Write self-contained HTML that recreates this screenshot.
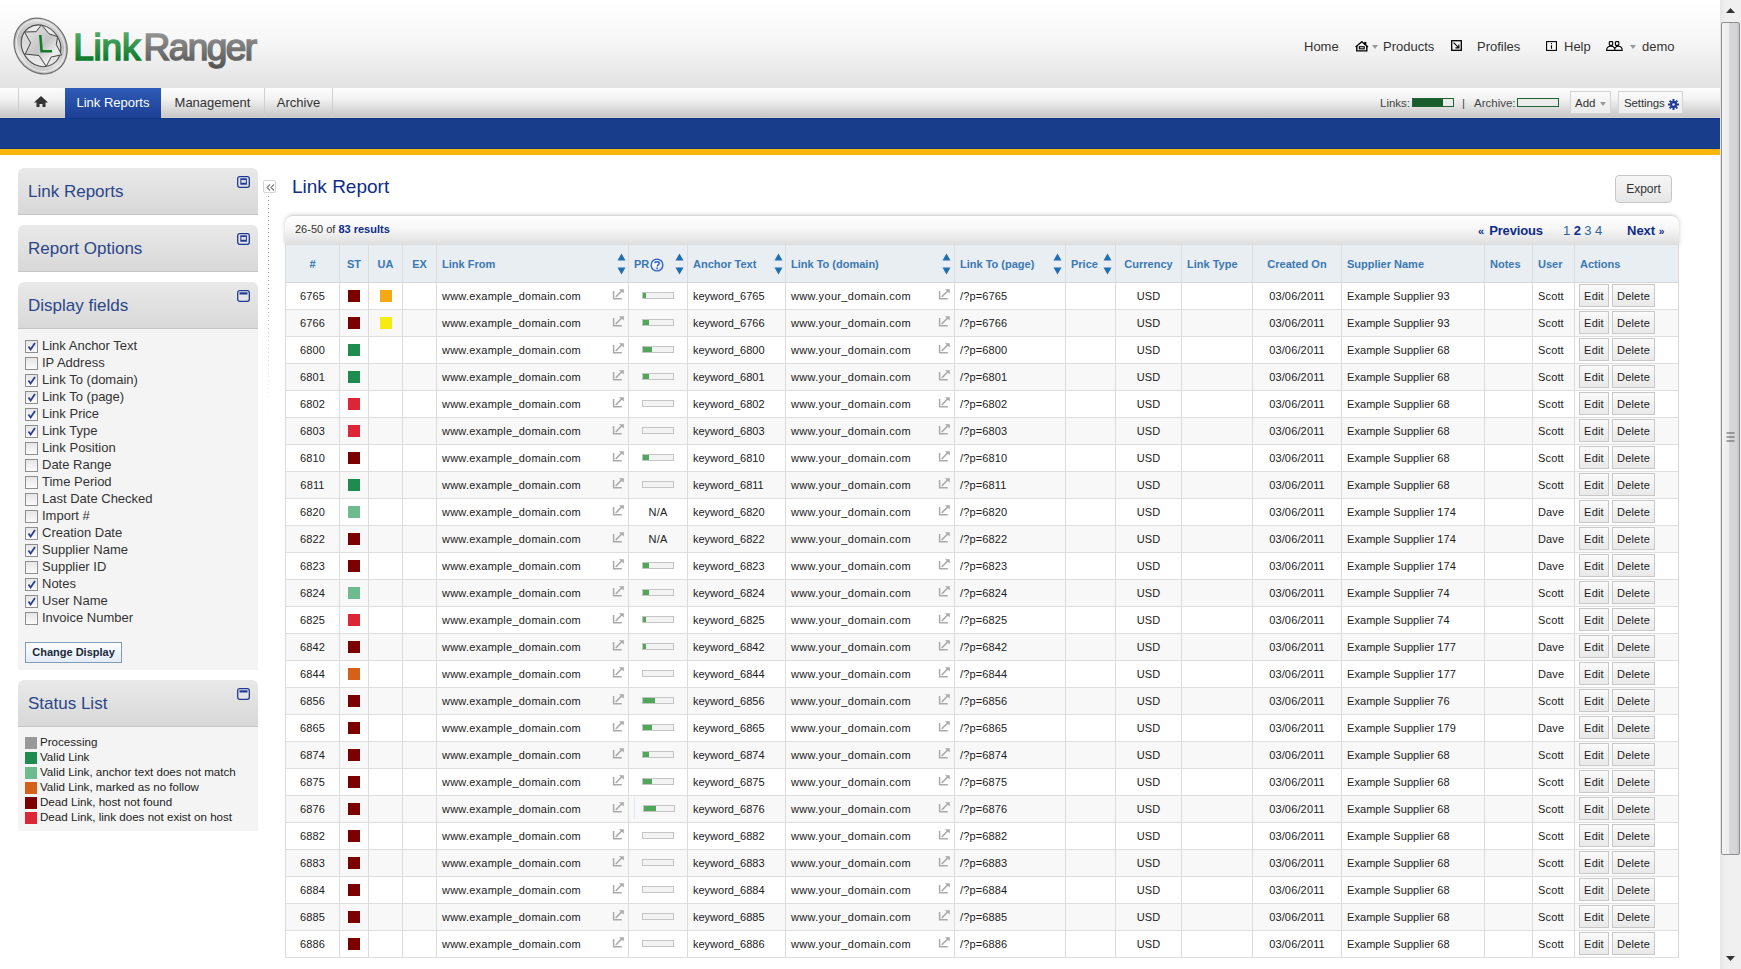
<!DOCTYPE html>
<html><head><meta charset="utf-8">
<style>
*{box-sizing:border-box;margin:0;padding:0}
html,body{width:1741px;height:969px;overflow:hidden;background:#fff;font-family:"Liberation Sans",sans-serif;color:#333}
.abs{position:absolute}
#hdr{position:absolute;left:0;top:0;width:1720px;height:88px;background:linear-gradient(#ffffff 0%,#f7f7f7 45%,#e2e2e2 100%)}
#logo{position:absolute;left:12px;top:16px}
#brand{position:absolute;left:73px;top:24px;font-size:37px;font-weight:bold;letter-spacing:-1.9px;white-space:nowrap;line-height:44px}
#brand .g{color:#1f8a3a;background:linear-gradient(#4aa662,#137a2c);-webkit-background-clip:text;color:transparent}
#brand .r{background:linear-gradient(#8e8e8e,#5c5c5c);-webkit-background-clip:text;color:transparent}
.tn{position:absolute;top:39px;font-size:13px;color:#333;white-space:nowrap;line-height:16px}
#nav{position:absolute;left:0;top:88px;width:1720px;height:30px;background:linear-gradient(#fcfcfc 0%,#f3f3f3 35%,#c8c8c8 96%,#dcd8d0 100%)}
.tab{position:absolute;top:0;height:30px;font-size:13px;line-height:30px;color:#333;text-align:center;border-left:1px solid #cfcfcf;white-space:nowrap}
.tab.on{background:linear-gradient(#2e5cb6,#1d3f93);color:#fff;border-left:none}
#blue{position:absolute;left:0;top:118px;width:1720px;height:31px;background:#183d8a;border-top:1px solid #10338a;border-bottom:1px solid #143887}
#yel{position:absolute;left:0;top:149px;width:1720px;height:6px;background:#fbb60e}
.tb{position:absolute;font-size:11.5px;line-height:14px;color:#444;white-space:nowrap}
.bar{position:absolute;top:10px;height:9px;border:1px solid #1c6431;background:#ebebeb}
.bar b{display:block;height:7px;background:#1a5e2e}
.btnx{position:absolute;top:3px;height:23px;border:1px solid #d4d4d4;background:linear-gradient(#fafafa,#ececec);font-size:11.5px;line-height:23px;color:#333;padding-left:5px;white-space:nowrap}
/* sidebar */
.ph{position:absolute;left:18px;width:240px;height:47px;border-radius:6px 6px 0 0;background:linear-gradient(#e9e9e9,#d8d8d8);border-bottom:1px solid #c6c6c6}
.ph span{position:absolute;left:10px;top:14px;font-size:17px;color:#2a4689;line-height:20px;white-space:nowrap}
.ph svg{position:absolute;left:219px;top:8px}
.pb{position:absolute;left:18px;width:240px;background:#f4f4f4}
.fld{position:absolute;left:7px;font-size:13px;line-height:17px;color:#333;white-space:nowrap;padding-left:17px}
.cb{position:absolute;left:0;top:3px;width:13px;height:13px;border:1px solid #8e8e8e;background:linear-gradient(#e6e6e6,#fafafa)}
.cb svg{position:absolute;left:1px;top:1px}
.sl{position:absolute;left:7px;font-size:11.6px;line-height:15px;color:#222;white-space:nowrap;padding-left:15px}
.sl i{position:absolute;left:0;top:3px;width:12px;height:12px}
#chg{position:absolute;left:7px;top:313px;width:97px;height:21px;border:1px solid #7f9db9;background:linear-gradient(#fdfeff,#e4ecf6);font-size:11px;font-weight:bold;color:#1a2a3a;line-height:19px;text-align:center}
/* main */
#title{position:absolute;left:292px;top:175px;font-size:19px;color:#0e2c88;line-height:24px;white-space:nowrap}
#export{position:absolute;left:1615px;top:175px;width:57px;height:28px;border:1px solid #c6c6c6;border-radius:4px;background:linear-gradient(#f6f6f6,#e6e6e6);font-size:12px;line-height:26px;text-align:center;color:#333}
#tp{position:absolute;left:285px;top:215px;width:1394px;height:743px}
#tph{position:absolute;left:0;top:0;width:1394px;height:30px;border-radius:8px 8px 0 0;background:linear-gradient(#ffffff 0%,#f8f8f8 40%,#dedede 100%);border-top:1px solid #d8d8d8;box-shadow:0 0 4px rgba(0,0,0,.2)}
#tbl{position:absolute;left:0;top:30px;width:1394px;height:713px;border-left:1px solid #d8d8d8;border-right:1px solid #d8d8d8;border-bottom:1px solid #d8d8d8}
.row,.hrow{position:absolute;left:-1px;width:1393px;height:27px;border-bottom:1px solid #dedede;background:#fff}
.row.alt{background:#f8f8f8}
.hrow{top:0;height:38px;background:#e8eef1;border-bottom:1px solid #d6d6d6}
.c{position:absolute;top:0;height:100%;border-left:1px solid #dcdcdc;font-size:11px;line-height:26px;padding-left:5px;white-space:nowrap;color:#222;letter-spacing:0.15px}
.c.ctr{text-align:center;padding-left:0}
.hrow .c{font-weight:bold;color:#3b78b4;line-height:39px;letter-spacing:0}
.sa{position:absolute;top:8px}
.q{position:absolute;left:21px;top:13px}
.sq{position:absolute;left:9px;top:7px;width:12px;height:12px}
.ext{position:absolute;right:4px;top:5px}
.pr{position:absolute;left:13px;top:9px;width:32px;height:7px;border:1px solid #c4c4c4;background:#f3f3f3}
.pr b{display:block;height:5px;background:#4fa85a}
.btn{position:absolute;top:1px;height:23px;border:1px solid #c8c8c8;background:linear-gradient(#fafafa,#e9e9e9);font-size:11px;line-height:23px;text-align:center;color:#222;letter-spacing:0.2px}
.b1{left:4px;width:30px}.b2{left:37px;width:43px}
/* scrollbar */
#sb{position:absolute;left:1720px;top:0;width:21px;height:969px;background:linear-gradient(90deg,#e6e6e6,#f0f0f0 30%,#f0f0f0)}
#thumb{position:absolute;left:1px;top:22px;width:19px;height:833px;border:1px solid #8f8f8f;border-radius:2px;background:linear-gradient(90deg,#f4f4f4,#ececec 40%,#d6d6d8 45%,#d4d4d6 85%,#c4c4c6)}
</style></head><body>
<div id="hdr">
 <svg id="logo" width="60" height="62" viewBox="0 0 60 62">
  <defs>
   <linearGradient id="lg1" x1="0" y1="0" x2="1" y2="1"><stop offset="0" stop-color="#ececec"/><stop offset=".45" stop-color="#bcbcbc"/><stop offset=".7" stop-color="#e2e2e2"/><stop offset="1" stop-color="#9a9a9a"/></linearGradient>
   <linearGradient id="lg2" x1="0" y1="0" x2="1" y2="1"><stop offset="0" stop-color="#fafafa"/><stop offset=".5" stop-color="#d8d8d8"/><stop offset="1" stop-color="#f6f6f6"/></linearGradient>
   <linearGradient id="lg3" x1="0" y1="0" x2="1" y2="1"><stop offset="0" stop-color="#e8e8e8"/><stop offset=".5" stop-color="#c4c4c4"/><stop offset=".75" stop-color="#efefef"/><stop offset="1" stop-color="#bdbdbd"/></linearGradient>
  </defs>
  <ellipse cx="28.6" cy="30.1" rx="29" ry="25.3" transform="rotate(55 28.6 30.1)" fill="url(#lg1)" stroke="#6e6e6e" stroke-width="1.2"/>
  <ellipse cx="28.6" cy="30.1" rx="26.6" ry="22.9" transform="rotate(55 28.6 30.1)" fill="none" stroke="#f4f4f4" stroke-width="0.9" opacity=".8"/>
  <ellipse cx="29" rx="21.8" ry="18.8" transform="rotate(55 29 29.8)" cy="29.8" fill="url(#lg2)" stroke="#4a4a4a" stroke-width="1.1"/>
  <path d="M12.5 16 L24.1 15.7 L29.5 8.8 L37.1 17.8 L45.6 20.7 L44.3 28.7 L49.7 38.8 L39.2 41 L34.2 50.4 L27 39.5 L13.2 38.1 L18.6 26.9 Z" fill="url(#lg3)" stroke="#454545" stroke-width="1" stroke-linejoin="round"/>
  <path d="M28.3 19 L29.6 35.3 L40 35.3" fill="none" stroke="#127a2a" stroke-width="2.6"/>
 </svg>
 <svg class="abs" style="left:70px;top:20px" width="200" height="56" viewBox="0 0 200 56">
  <defs>
   <linearGradient id="gg" x1="0" y1="12" x2="0" y2="40" gradientUnits="userSpaceOnUse"><stop offset="0" stop-color="#56ab6a"/><stop offset="1" stop-color="#0f7a2c"/></linearGradient>
   <linearGradient id="gr" x1="0" y1="12" x2="0" y2="48" gradientUnits="userSpaceOnUse"><stop offset="0" stop-color="#959595"/><stop offset="1" stop-color="#555"/></linearGradient>
  </defs>
  <text x="3.2" y="40.2" font-family="Liberation Sans" font-size="37" fill="url(#gg)" stroke="url(#gg)" stroke-width="1.6" letter-spacing="-0.2">Link</text>
  <text x="73.6" y="40.2" font-family="Liberation Sans" font-size="37" fill="url(#gr)" stroke="url(#gr)" stroke-width="1.6" letter-spacing="-1.55">Ranger</text>
 </svg>
 <div class="tn" style="left:1304px">Home</div>
 <svg class="abs" style="left:1355px;top:41px" width="14" height="11" viewBox="0 0 14 11"><path d="M0.6 6L6.8 0.8L13 6" fill="none" stroke="#000" stroke-width="1.4"/><path d="M1.8 5V9.9H11.8V5" fill="none" stroke="#000" stroke-width="1.4"/><rect x="4.4" y="5.7" width="4.8" height="2.1" fill="none" stroke="#000" stroke-width="1.1"/><rect x="9.3" y="0.9" width="2" height="2.8" fill="#000"/></svg>
 <svg class="abs" style="left:1372px;top:45px" width="6" height="4" viewBox="0 0 6 4"><path d="M0 0H6L3 4Z" fill="#999"/></svg>
 <div class="tn" style="left:1383px">Products</div>
 <svg class="abs" style="left:1451px;top:40px" width="11" height="11" viewBox="0 0 11 11"><rect x=".7" y=".7" width="9.6" height="9.6" fill="none" stroke="#000" stroke-width="1.3"/><path d="M2.6 2.6L7.9 7.9M4.4 7.9H7.9V4.4" fill="none" stroke="#000" stroke-width="1.1"/></svg>
 <div class="tn" style="left:1477px">Profiles</div>
 <svg class="abs" style="left:1546px;top:41px" width="11" height="10" viewBox="0 0 11 10"><rect x=".6" y=".6" width="9.8" height="8.8" fill="#fff" stroke="#000" stroke-width="1.1"/><path d="M5.5 2.1V3.3M5.5 4.2V7.8" stroke="#000" stroke-width="1.2"/></svg>
 <div class="tn" style="left:1564px">Help</div>
 <svg class="abs" style="left:1606px;top:41px" width="17" height="10" viewBox="0 0 17 10"><path d="M0.6 9.4C0.6 6.6 2.5 5.3 4.8 5.3S9 6.6 9 9.4ZM8.6 9.4C8.6 6.6 10.5 5.3 12.4 5.3S16.2 6.6 16.2 9.4Z" fill="#fff" stroke="#000" stroke-width="1.1"/><rect x="3.3" y="0.6" width="3.4" height="3.8" rx=".6" fill="#fff" stroke="#000" stroke-width="1.1"/><rect x="9.4" y="0.6" width="3.4" height="3.8" rx=".6" fill="#fff" stroke="#000" stroke-width="1.1"/></svg>
 <svg class="abs" style="left:1630px;top:45px" width="6" height="4" viewBox="0 0 6 4"><path d="M0 0H6L3 4Z" fill="#999"/></svg>
 <div class="tn" style="left:1642px">demo</div>
</div>
<div id="nav">
 <div class="tab" style="left:18px;width:47px"><svg style="position:absolute;left:15px;top:8px" width="14" height="11" viewBox="0 0 14 11"><path d="M7 0L0 6.5H2.5V11H5.5V8H8.5V11H11.5V6.5H14Z" fill="#333"/></svg></div>
 <div class="tab on" style="left:65px;width:96px">Link Reports</div>
 <div class="tab" style="left:161px;width:103px;border-left:none">Management</div>
 <div class="tab" style="left:264px;width:68px">Archive</div>
 <div class="tab" style="left:332px;width:1px"></div>
 <div class="tb" style="left:1380px;top:8px">Links:</div>
 <div class="bar" style="left:1412px;width:42px"><b style="width:30px"></b></div>
 <div class="tb" style="left:1462px;top:8px">|</div>
 <div class="tb" style="left:1474px;top:8px">Archive:</div>
 <div class="bar" style="left:1517px;width:42px"></div>
 <div class="btnx" style="left:1570px;width:41px;padding-left:4px">Add <svg style="position:absolute;left:29px;top:10px" width="6" height="4" viewBox="0 0 6 4"><path d="M0 0H6L3 4Z" fill="#999"/></svg></div>
 <div class="btnx" style="left:1618px;width:65px;letter-spacing:-0.1px">Settings <svg style="position:absolute;left:49px;top:7px" width="11" height="11" viewBox="0 0 11 11"><g fill="#1f3a96"><circle cx="5.5" cy="5.5" r="3.4"/><rect x="4.5" y="0" width="2" height="11"/><rect x="0" y="4.5" width="11" height="2"/><rect x="4.5" y="0" width="2" height="11" transform="rotate(45 5.5 5.5)"/><rect x="4.5" y="0" width="2" height="11" transform="rotate(-45 5.5 5.5)"/></g><circle cx="5.5" cy="5.5" r="1.3" fill="#e8e8e8"/></svg></div>
</div>
<div id="blue"></div>
<div id="yel"></div>

<!-- sidebar -->
<div class="ph" style="top:168px"><span>Link Reports</span><svg width="13" height="12" viewBox="0 0 13 12"><rect x=".7" y=".7" width="11.6" height="10.6" rx="2" fill="none" stroke="#1f3a96" stroke-width="1.3"/><rect x="3.3" y="2.3" width="6.6" height="6.4" fill="#1f3a96"/><rect x="4.3" y="4" width="4.6" height="2.8" fill="#dcdcdc"/></svg></div>
<div class="ph" style="top:225px"><span>Report Options</span><svg width="13" height="12" viewBox="0 0 13 12"><rect x=".7" y=".7" width="11.6" height="10.6" rx="2" fill="none" stroke="#1f3a96" stroke-width="1.3"/><rect x="3.3" y="2.3" width="6.6" height="6.4" fill="#1f3a96"/><rect x="4.3" y="4" width="4.6" height="2.8" fill="#dcdcdc"/></svg></div>
<div class="ph" style="top:282px"><span>Display fields</span><svg width="13" height="12" viewBox="0 0 13 12"><rect x=".7" y=".7" width="11.6" height="10.6" rx="2" fill="none" stroke="#1f3a96" stroke-width="1.3"/><rect x="2.5" y="2.3" width="8" height="2.2" fill="#1f3a96"/></svg></div>
<div class="pb" style="top:329px;height:341px">
 <div class="abs" style="left:0;top:8px;width:240px;height:300px"><div class="fld" style="top:0px"><span class="cb"><svg width="9" height="9" viewBox="0 0 9 9"><path d="M1.5 4.5L3.6 7.5L8 1" fill="none" stroke="#2c3f8c" stroke-width="1.8"/></svg></span>Link Anchor Text</div><div class="fld" style="top:17px"><span class="cb"></span>IP Address</div><div class="fld" style="top:34px"><span class="cb"><svg width="9" height="9" viewBox="0 0 9 9"><path d="M1.5 4.5L3.6 7.5L8 1" fill="none" stroke="#2c3f8c" stroke-width="1.8"/></svg></span>Link To (domain)</div><div class="fld" style="top:51px"><span class="cb"><svg width="9" height="9" viewBox="0 0 9 9"><path d="M1.5 4.5L3.6 7.5L8 1" fill="none" stroke="#2c3f8c" stroke-width="1.8"/></svg></span>Link To (page)</div><div class="fld" style="top:68px"><span class="cb"><svg width="9" height="9" viewBox="0 0 9 9"><path d="M1.5 4.5L3.6 7.5L8 1" fill="none" stroke="#2c3f8c" stroke-width="1.8"/></svg></span>Link Price</div><div class="fld" style="top:85px"><span class="cb"><svg width="9" height="9" viewBox="0 0 9 9"><path d="M1.5 4.5L3.6 7.5L8 1" fill="none" stroke="#2c3f8c" stroke-width="1.8"/></svg></span>Link Type</div><div class="fld" style="top:102px"><span class="cb"></span>Link Position</div><div class="fld" style="top:119px"><span class="cb"></span>Date Range</div><div class="fld" style="top:136px"><span class="cb"></span>Time Period</div><div class="fld" style="top:153px"><span class="cb"></span>Last Date Checked</div><div class="fld" style="top:170px"><span class="cb"></span>Import #</div><div class="fld" style="top:187px"><span class="cb"><svg width="9" height="9" viewBox="0 0 9 9"><path d="M1.5 4.5L3.6 7.5L8 1" fill="none" stroke="#2c3f8c" stroke-width="1.8"/></svg></span>Creation Date</div><div class="fld" style="top:204px"><span class="cb"><svg width="9" height="9" viewBox="0 0 9 9"><path d="M1.5 4.5L3.6 7.5L8 1" fill="none" stroke="#2c3f8c" stroke-width="1.8"/></svg></span>Supplier Name</div><div class="fld" style="top:221px"><span class="cb"></span>Supplier ID</div><div class="fld" style="top:238px"><span class="cb"><svg width="9" height="9" viewBox="0 0 9 9"><path d="M1.5 4.5L3.6 7.5L8 1" fill="none" stroke="#2c3f8c" stroke-width="1.8"/></svg></span>Notes</div><div class="fld" style="top:255px"><span class="cb"><svg width="9" height="9" viewBox="0 0 9 9"><path d="M1.5 4.5L3.6 7.5L8 1" fill="none" stroke="#2c3f8c" stroke-width="1.8"/></svg></span>User Name</div><div class="fld" style="top:272px"><span class="cb"></span>Invoice Number</div></div>
 <div id="chg">Change Display</div>
</div>
<div class="ph" style="top:680px"><span>Status List</span><svg width="13" height="12" viewBox="0 0 13 12"><rect x=".7" y=".7" width="11.6" height="10.6" rx="2" fill="none" stroke="#1f3a96" stroke-width="1.3"/><rect x="2.5" y="2.3" width="8" height="2.2" fill="#1f3a96"/></svg></div>
<div class="pb" style="top:727px;height:104px">
 <div class="abs" style="left:0;top:7px;width:240px;height:95px"><div class="sl" style="top:0px"><i style="background:#999999"></i>Processing</div><div class="sl" style="top:15px"><i style="background:#1e8c4e"></i>Valid Link</div><div class="sl" style="top:30px"><i style="background:#6dbb8e"></i>Valid Link, anchor text does not match</div><div class="sl" style="top:45px"><i style="background:#d4601a"></i>Valid Link, marked as no follow</div><div class="sl" style="top:60px"><i style="background:#7a0000"></i>Dead Link, host not found</div><div class="sl" style="top:75px"><i style="background:#dc2638"></i>Dead Link, link does not exist on host</div></div>
</div>

<!-- collapse toggle -->
<div class="abs" style="left:263px;top:180px;width:13px;height:13px;border:1px solid #d4d4d4;border-radius:2px;background:#fff"><svg style="position:absolute;left:1.5px;top:2.5px" width="9" height="7" viewBox="0 0 9 7"><path d="M4 0.5L1 3.5L4 6.5M8 0.5L5 3.5L8 6.5" fill="none" stroke="#777" stroke-width="1.1"/></svg></div>
<div class="abs" style="left:268px;top:196px;width:1px;height:222px;background:repeating-linear-gradient(#9a9a9a 0 1px,transparent 1px 4px);-webkit-mask-image:linear-gradient(#000 30%,transparent)"></div>

<!-- main -->
<div id="title">Link Report</div>
<div id="export">Export</div>
<div id="tp">
 <div id="tph">
  <div class="abs" style="left:10px;top:6px;font-size:11px;line-height:14px;color:#333;white-space:nowrap">26-50 of <span style="color:#0e2c88;font-weight:bold">83 results</span></div>
  <div class="abs" style="left:1193px;top:7px;font-size:13px;line-height:16px;color:#0e2c88;font-weight:bold;white-space:nowrap"><span style="font-size:11px">«</span><span style="margin-left:5px;letter-spacing:-0.15px">Previous</span></div>
  <div class="abs" style="left:1278px;top:7px;font-size:13px;line-height:16px;color:#2a6496;white-space:nowrap;letter-spacing:-0.1px">1 <b style="color:#0e2c88">2</b> 3 4</div>
  <div class="abs" style="left:1342px;top:7px;font-size:13px;line-height:16px;color:#0e2c88;font-weight:bold;white-space:nowrap">Next <span style="font-size:10px">»</span></div>
 </div>
 <div id="tbl">
  <div class="hrow"><div class="c ctr" style="left:0px;width:54px">#</div><div class="c ctr" style="left:54px;width:29px">ST</div><div class="c ctr" style="left:83px;width:34px">UA</div><div class="c ctr" style="left:117px;width:34px">EX</div><div class="c " style="left:151px;width:192px">Link From<svg class="sa" style="left:180px" width="9" height="22" viewBox="0 0 9 22"><path d="M0.5 7.5L4.5 0.5L8.5 7.5Z M0.5 14.5L4.5 21.5L8.5 14.5Z" fill="#1f6db5"/></svg></div><div class="c " style="left:343px;width:59px">PR<svg class="q" width="14" height="14" viewBox="0 0 14 14"><defs><radialGradient id="qg" cx=".4" cy=".4" r=".7"><stop offset="0" stop-color="#fff"/><stop offset="1" stop-color="#d8dde6"/></radialGradient></defs><circle cx="7" cy="7" r="5.9" fill="url(#qg)" stroke="#2a5fd0" stroke-width="1.3"/><path d="M5 5.3C5 3.2 9.2 3.2 9.2 5.3C9.2 6.8 7.2 6.8 7.2 8.6" fill="none" stroke="#2a5fc8" stroke-width="1.5"/><rect x="6.4" y="9.6" width="1.6" height="1.6" fill="#2a5fc8"/></svg><svg class="sa" style="left:46px" width="9" height="22" viewBox="0 0 9 22"><path d="M0.5 7.5L4.5 0.5L8.5 7.5Z M0.5 14.5L4.5 21.5L8.5 14.5Z" fill="#1f6db5"/></svg></div><div class="c " style="left:402px;width:98px">Anchor Text<svg class="sa" style="left:86px" width="9" height="22" viewBox="0 0 9 22"><path d="M0.5 7.5L4.5 0.5L8.5 7.5Z M0.5 14.5L4.5 21.5L8.5 14.5Z" fill="#1f6db5"/></svg></div><div class="c " style="left:500px;width:169px">Link To (domain)<svg class="sa" style="left:156px" width="9" height="22" viewBox="0 0 9 22"><path d="M0.5 7.5L4.5 0.5L8.5 7.5Z M0.5 14.5L4.5 21.5L8.5 14.5Z" fill="#1f6db5"/></svg></div><div class="c " style="left:669px;width:111px">Link To (page)<svg class="sa" style="left:98px" width="9" height="22" viewBox="0 0 9 22"><path d="M0.5 7.5L4.5 0.5L8.5 7.5Z M0.5 14.5L4.5 21.5L8.5 14.5Z" fill="#1f6db5"/></svg></div><div class="c " style="left:780px;width:50px">Price<svg class="sa" style="left:37px" width="9" height="22" viewBox="0 0 9 22"><path d="M0.5 7.5L4.5 0.5L8.5 7.5Z M0.5 14.5L4.5 21.5L8.5 14.5Z" fill="#1f6db5"/></svg></div><div class="c ctr" style="left:830px;width:66px">Currency</div><div class="c " style="left:896px;width:71px">Link Type</div><div class="c ctr" style="left:967px;width:89px">Created On</div><div class="c " style="left:1056px;width:143px">Supplier Name</div><div class="c " style="left:1199px;width:48px">Notes</div><div class="c " style="left:1247px;width:42px">User</div><div class="c " style="left:1289px;width:104px">Actions</div></div>
  <div class="row" style="top:38px"><div class="c ctr" style="left:0px;width:54px">6765</div><div class="c " style="left:54px;width:29px"><i class="sq" style="left:8px;background:#7a0000"></i></div><div class="c " style="left:83px;width:34px"><i class="sq" style="left:11px;background:#f6a815"></i></div><div class="c " style="left:117px;width:34px"></div><div class="c " style="left:151px;width:192px"><span style="letter-spacing:0.23px">www.example_domain.com</span><svg class="ext" width="12" height="12" viewBox="0 0 12 12"><path d="M1.6 3V10.8H9.8" fill="none" stroke="#aaa" stroke-width="1.5"/><path d="M4.2 8.5L9.6 3" fill="none" stroke="#aaa" stroke-width="1.7" stroke-linecap="round"/><path d="M6.9 1.2H11.8V5.6Z" fill="#aaa"/></svg></div><div class="c " style="left:343px;width:59px"><span class="pr" ><b style="width:3px"></b></span></div><div class="c " style="left:402px;width:98px"><span style="letter-spacing:0">keyword_6765</span></div><div class="c " style="left:500px;width:169px"><span style="letter-spacing:0.33px">www.your_domain.com</span><svg class="ext" width="12" height="12" viewBox="0 0 12 12"><path d="M1.6 3V10.8H9.8" fill="none" stroke="#aaa" stroke-width="1.5"/><path d="M4.2 8.5L9.6 3" fill="none" stroke="#aaa" stroke-width="1.7" stroke-linecap="round"/><path d="M6.9 1.2H11.8V5.6Z" fill="#aaa"/></svg></div><div class="c " style="left:669px;width:111px">/?p=6765</div><div class="c " style="left:780px;width:50px"></div><div class="c ctr" style="left:830px;width:66px">USD</div><div class="c " style="left:896px;width:71px"></div><div class="c ctr" style="left:967px;width:89px">03/06/2011</div><div class="c " style="left:1056px;width:143px"><span style="letter-spacing:0.06px">Example Supplier 93</span></div><div class="c " style="left:1199px;width:48px"></div><div class="c " style="left:1247px;width:42px">Scott</div><div class="c " style="left:1289px;width:104px"><span class="btn b1">Edit</span><span class="btn b2">Delete</span></div></div><div class="row alt" style="top:65px"><div class="c ctr" style="left:0px;width:54px">6766</div><div class="c " style="left:54px;width:29px"><i class="sq" style="left:8px;background:#7a0000"></i></div><div class="c " style="left:83px;width:34px"><i class="sq" style="left:11px;background:#f5eb10"></i></div><div class="c " style="left:117px;width:34px"></div><div class="c " style="left:151px;width:192px"><span style="letter-spacing:0.23px">www.example_domain.com</span><svg class="ext" width="12" height="12" viewBox="0 0 12 12"><path d="M1.6 3V10.8H9.8" fill="none" stroke="#aaa" stroke-width="1.5"/><path d="M4.2 8.5L9.6 3" fill="none" stroke="#aaa" stroke-width="1.7" stroke-linecap="round"/><path d="M6.9 1.2H11.8V5.6Z" fill="#aaa"/></svg></div><div class="c " style="left:343px;width:59px"><span class="pr" ><b style="width:6px"></b></span></div><div class="c " style="left:402px;width:98px"><span style="letter-spacing:0">keyword_6766</span></div><div class="c " style="left:500px;width:169px"><span style="letter-spacing:0.33px">www.your_domain.com</span><svg class="ext" width="12" height="12" viewBox="0 0 12 12"><path d="M1.6 3V10.8H9.8" fill="none" stroke="#aaa" stroke-width="1.5"/><path d="M4.2 8.5L9.6 3" fill="none" stroke="#aaa" stroke-width="1.7" stroke-linecap="round"/><path d="M6.9 1.2H11.8V5.6Z" fill="#aaa"/></svg></div><div class="c " style="left:669px;width:111px">/?p=6766</div><div class="c " style="left:780px;width:50px"></div><div class="c ctr" style="left:830px;width:66px">USD</div><div class="c " style="left:896px;width:71px"></div><div class="c ctr" style="left:967px;width:89px">03/06/2011</div><div class="c " style="left:1056px;width:143px"><span style="letter-spacing:0.06px">Example Supplier 93</span></div><div class="c " style="left:1199px;width:48px"></div><div class="c " style="left:1247px;width:42px">Scott</div><div class="c " style="left:1289px;width:104px"><span class="btn b1">Edit</span><span class="btn b2">Delete</span></div></div><div class="row" style="top:92px"><div class="c ctr" style="left:0px;width:54px">6800</div><div class="c " style="left:54px;width:29px"><i class="sq" style="left:8px;background:#1e8c4e"></i></div><div class="c " style="left:83px;width:34px"></div><div class="c " style="left:117px;width:34px"></div><div class="c " style="left:151px;width:192px"><span style="letter-spacing:0.23px">www.example_domain.com</span><svg class="ext" width="12" height="12" viewBox="0 0 12 12"><path d="M1.6 3V10.8H9.8" fill="none" stroke="#aaa" stroke-width="1.5"/><path d="M4.2 8.5L9.6 3" fill="none" stroke="#aaa" stroke-width="1.7" stroke-linecap="round"/><path d="M6.9 1.2H11.8V5.6Z" fill="#aaa"/></svg></div><div class="c " style="left:343px;width:59px"><span class="pr" ><b style="width:9px"></b></span></div><div class="c " style="left:402px;width:98px"><span style="letter-spacing:0">keyword_6800</span></div><div class="c " style="left:500px;width:169px"><span style="letter-spacing:0.33px">www.your_domain.com</span><svg class="ext" width="12" height="12" viewBox="0 0 12 12"><path d="M1.6 3V10.8H9.8" fill="none" stroke="#aaa" stroke-width="1.5"/><path d="M4.2 8.5L9.6 3" fill="none" stroke="#aaa" stroke-width="1.7" stroke-linecap="round"/><path d="M6.9 1.2H11.8V5.6Z" fill="#aaa"/></svg></div><div class="c " style="left:669px;width:111px">/?p=6800</div><div class="c " style="left:780px;width:50px"></div><div class="c ctr" style="left:830px;width:66px">USD</div><div class="c " style="left:896px;width:71px"></div><div class="c ctr" style="left:967px;width:89px">03/06/2011</div><div class="c " style="left:1056px;width:143px"><span style="letter-spacing:0.06px">Example Supplier 68</span></div><div class="c " style="left:1199px;width:48px"></div><div class="c " style="left:1247px;width:42px">Scott</div><div class="c " style="left:1289px;width:104px"><span class="btn b1">Edit</span><span class="btn b2">Delete</span></div></div><div class="row alt" style="top:119px"><div class="c ctr" style="left:0px;width:54px">6801</div><div class="c " style="left:54px;width:29px"><i class="sq" style="left:8px;background:#1e8c4e"></i></div><div class="c " style="left:83px;width:34px"></div><div class="c " style="left:117px;width:34px"></div><div class="c " style="left:151px;width:192px"><span style="letter-spacing:0.23px">www.example_domain.com</span><svg class="ext" width="12" height="12" viewBox="0 0 12 12"><path d="M1.6 3V10.8H9.8" fill="none" stroke="#aaa" stroke-width="1.5"/><path d="M4.2 8.5L9.6 3" fill="none" stroke="#aaa" stroke-width="1.7" stroke-linecap="round"/><path d="M6.9 1.2H11.8V5.6Z" fill="#aaa"/></svg></div><div class="c " style="left:343px;width:59px"><span class="pr" ><b style="width:6px"></b></span></div><div class="c " style="left:402px;width:98px"><span style="letter-spacing:0">keyword_6801</span></div><div class="c " style="left:500px;width:169px"><span style="letter-spacing:0.33px">www.your_domain.com</span><svg class="ext" width="12" height="12" viewBox="0 0 12 12"><path d="M1.6 3V10.8H9.8" fill="none" stroke="#aaa" stroke-width="1.5"/><path d="M4.2 8.5L9.6 3" fill="none" stroke="#aaa" stroke-width="1.7" stroke-linecap="round"/><path d="M6.9 1.2H11.8V5.6Z" fill="#aaa"/></svg></div><div class="c " style="left:669px;width:111px">/?p=6801</div><div class="c " style="left:780px;width:50px"></div><div class="c ctr" style="left:830px;width:66px">USD</div><div class="c " style="left:896px;width:71px"></div><div class="c ctr" style="left:967px;width:89px">03/06/2011</div><div class="c " style="left:1056px;width:143px"><span style="letter-spacing:0.06px">Example Supplier 68</span></div><div class="c " style="left:1199px;width:48px"></div><div class="c " style="left:1247px;width:42px">Scott</div><div class="c " style="left:1289px;width:104px"><span class="btn b1">Edit</span><span class="btn b2">Delete</span></div></div><div class="row" style="top:146px"><div class="c ctr" style="left:0px;width:54px">6802</div><div class="c " style="left:54px;width:29px"><i class="sq" style="left:8px;background:#dc2638"></i></div><div class="c " style="left:83px;width:34px"></div><div class="c " style="left:117px;width:34px"></div><div class="c " style="left:151px;width:192px"><span style="letter-spacing:0.23px">www.example_domain.com</span><svg class="ext" width="12" height="12" viewBox="0 0 12 12"><path d="M1.6 3V10.8H9.8" fill="none" stroke="#aaa" stroke-width="1.5"/><path d="M4.2 8.5L9.6 3" fill="none" stroke="#aaa" stroke-width="1.7" stroke-linecap="round"/><path d="M6.9 1.2H11.8V5.6Z" fill="#aaa"/></svg></div><div class="c " style="left:343px;width:59px"><span class="pr" ><b style="width:0px"></b></span></div><div class="c " style="left:402px;width:98px"><span style="letter-spacing:0">keyword_6802</span></div><div class="c " style="left:500px;width:169px"><span style="letter-spacing:0.33px">www.your_domain.com</span><svg class="ext" width="12" height="12" viewBox="0 0 12 12"><path d="M1.6 3V10.8H9.8" fill="none" stroke="#aaa" stroke-width="1.5"/><path d="M4.2 8.5L9.6 3" fill="none" stroke="#aaa" stroke-width="1.7" stroke-linecap="round"/><path d="M6.9 1.2H11.8V5.6Z" fill="#aaa"/></svg></div><div class="c " style="left:669px;width:111px">/?p=6802</div><div class="c " style="left:780px;width:50px"></div><div class="c ctr" style="left:830px;width:66px">USD</div><div class="c " style="left:896px;width:71px"></div><div class="c ctr" style="left:967px;width:89px">03/06/2011</div><div class="c " style="left:1056px;width:143px"><span style="letter-spacing:0.06px">Example Supplier 68</span></div><div class="c " style="left:1199px;width:48px"></div><div class="c " style="left:1247px;width:42px">Scott</div><div class="c " style="left:1289px;width:104px"><span class="btn b1">Edit</span><span class="btn b2">Delete</span></div></div><div class="row alt" style="top:173px"><div class="c ctr" style="left:0px;width:54px">6803</div><div class="c " style="left:54px;width:29px"><i class="sq" style="left:8px;background:#dc2638"></i></div><div class="c " style="left:83px;width:34px"></div><div class="c " style="left:117px;width:34px"></div><div class="c " style="left:151px;width:192px"><span style="letter-spacing:0.23px">www.example_domain.com</span><svg class="ext" width="12" height="12" viewBox="0 0 12 12"><path d="M1.6 3V10.8H9.8" fill="none" stroke="#aaa" stroke-width="1.5"/><path d="M4.2 8.5L9.6 3" fill="none" stroke="#aaa" stroke-width="1.7" stroke-linecap="round"/><path d="M6.9 1.2H11.8V5.6Z" fill="#aaa"/></svg></div><div class="c " style="left:343px;width:59px"><span class="pr" ><b style="width:0px"></b></span></div><div class="c " style="left:402px;width:98px"><span style="letter-spacing:0">keyword_6803</span></div><div class="c " style="left:500px;width:169px"><span style="letter-spacing:0.33px">www.your_domain.com</span><svg class="ext" width="12" height="12" viewBox="0 0 12 12"><path d="M1.6 3V10.8H9.8" fill="none" stroke="#aaa" stroke-width="1.5"/><path d="M4.2 8.5L9.6 3" fill="none" stroke="#aaa" stroke-width="1.7" stroke-linecap="round"/><path d="M6.9 1.2H11.8V5.6Z" fill="#aaa"/></svg></div><div class="c " style="left:669px;width:111px">/?p=6803</div><div class="c " style="left:780px;width:50px"></div><div class="c ctr" style="left:830px;width:66px">USD</div><div class="c " style="left:896px;width:71px"></div><div class="c ctr" style="left:967px;width:89px">03/06/2011</div><div class="c " style="left:1056px;width:143px"><span style="letter-spacing:0.06px">Example Supplier 68</span></div><div class="c " style="left:1199px;width:48px"></div><div class="c " style="left:1247px;width:42px">Scott</div><div class="c " style="left:1289px;width:104px"><span class="btn b1">Edit</span><span class="btn b2">Delete</span></div></div><div class="row" style="top:200px"><div class="c ctr" style="left:0px;width:54px">6810</div><div class="c " style="left:54px;width:29px"><i class="sq" style="left:8px;background:#7a0000"></i></div><div class="c " style="left:83px;width:34px"></div><div class="c " style="left:117px;width:34px"></div><div class="c " style="left:151px;width:192px"><span style="letter-spacing:0.23px">www.example_domain.com</span><svg class="ext" width="12" height="12" viewBox="0 0 12 12"><path d="M1.6 3V10.8H9.8" fill="none" stroke="#aaa" stroke-width="1.5"/><path d="M4.2 8.5L9.6 3" fill="none" stroke="#aaa" stroke-width="1.7" stroke-linecap="round"/><path d="M6.9 1.2H11.8V5.6Z" fill="#aaa"/></svg></div><div class="c " style="left:343px;width:59px"><span class="pr" ><b style="width:6px"></b></span></div><div class="c " style="left:402px;width:98px"><span style="letter-spacing:0">keyword_6810</span></div><div class="c " style="left:500px;width:169px"><span style="letter-spacing:0.33px">www.your_domain.com</span><svg class="ext" width="12" height="12" viewBox="0 0 12 12"><path d="M1.6 3V10.8H9.8" fill="none" stroke="#aaa" stroke-width="1.5"/><path d="M4.2 8.5L9.6 3" fill="none" stroke="#aaa" stroke-width="1.7" stroke-linecap="round"/><path d="M6.9 1.2H11.8V5.6Z" fill="#aaa"/></svg></div><div class="c " style="left:669px;width:111px">/?p=6810</div><div class="c " style="left:780px;width:50px"></div><div class="c ctr" style="left:830px;width:66px">USD</div><div class="c " style="left:896px;width:71px"></div><div class="c ctr" style="left:967px;width:89px">03/06/2011</div><div class="c " style="left:1056px;width:143px"><span style="letter-spacing:0.06px">Example Supplier 68</span></div><div class="c " style="left:1199px;width:48px"></div><div class="c " style="left:1247px;width:42px">Scott</div><div class="c " style="left:1289px;width:104px"><span class="btn b1">Edit</span><span class="btn b2">Delete</span></div></div><div class="row alt" style="top:227px"><div class="c ctr" style="left:0px;width:54px">6811</div><div class="c " style="left:54px;width:29px"><i class="sq" style="left:8px;background:#1e8c4e"></i></div><div class="c " style="left:83px;width:34px"></div><div class="c " style="left:117px;width:34px"></div><div class="c " style="left:151px;width:192px"><span style="letter-spacing:0.23px">www.example_domain.com</span><svg class="ext" width="12" height="12" viewBox="0 0 12 12"><path d="M1.6 3V10.8H9.8" fill="none" stroke="#aaa" stroke-width="1.5"/><path d="M4.2 8.5L9.6 3" fill="none" stroke="#aaa" stroke-width="1.7" stroke-linecap="round"/><path d="M6.9 1.2H11.8V5.6Z" fill="#aaa"/></svg></div><div class="c " style="left:343px;width:59px"><span class="pr" ><b style="width:0px"></b></span></div><div class="c " style="left:402px;width:98px"><span style="letter-spacing:0">keyword_6811</span></div><div class="c " style="left:500px;width:169px"><span style="letter-spacing:0.33px">www.your_domain.com</span><svg class="ext" width="12" height="12" viewBox="0 0 12 12"><path d="M1.6 3V10.8H9.8" fill="none" stroke="#aaa" stroke-width="1.5"/><path d="M4.2 8.5L9.6 3" fill="none" stroke="#aaa" stroke-width="1.7" stroke-linecap="round"/><path d="M6.9 1.2H11.8V5.6Z" fill="#aaa"/></svg></div><div class="c " style="left:669px;width:111px">/?p=6811</div><div class="c " style="left:780px;width:50px"></div><div class="c ctr" style="left:830px;width:66px">USD</div><div class="c " style="left:896px;width:71px"></div><div class="c ctr" style="left:967px;width:89px">03/06/2011</div><div class="c " style="left:1056px;width:143px"><span style="letter-spacing:0.06px">Example Supplier 68</span></div><div class="c " style="left:1199px;width:48px"></div><div class="c " style="left:1247px;width:42px">Scott</div><div class="c " style="left:1289px;width:104px"><span class="btn b1">Edit</span><span class="btn b2">Delete</span></div></div><div class="row" style="top:254px"><div class="c ctr" style="left:0px;width:54px">6820</div><div class="c " style="left:54px;width:29px"><i class="sq" style="left:8px;background:#6dbb8e"></i></div><div class="c " style="left:83px;width:34px"></div><div class="c " style="left:117px;width:34px"></div><div class="c " style="left:151px;width:192px"><span style="letter-spacing:0.23px">www.example_domain.com</span><svg class="ext" width="12" height="12" viewBox="0 0 12 12"><path d="M1.6 3V10.8H9.8" fill="none" stroke="#aaa" stroke-width="1.5"/><path d="M4.2 8.5L9.6 3" fill="none" stroke="#aaa" stroke-width="1.7" stroke-linecap="round"/><path d="M6.9 1.2H11.8V5.6Z" fill="#aaa"/></svg></div><div class="c ctr" style="left:343px;width:59px">N/A</div><div class="c " style="left:402px;width:98px"><span style="letter-spacing:0">keyword_6820</span></div><div class="c " style="left:500px;width:169px"><span style="letter-spacing:0.33px">www.your_domain.com</span><svg class="ext" width="12" height="12" viewBox="0 0 12 12"><path d="M1.6 3V10.8H9.8" fill="none" stroke="#aaa" stroke-width="1.5"/><path d="M4.2 8.5L9.6 3" fill="none" stroke="#aaa" stroke-width="1.7" stroke-linecap="round"/><path d="M6.9 1.2H11.8V5.6Z" fill="#aaa"/></svg></div><div class="c " style="left:669px;width:111px">/?p=6820</div><div class="c " style="left:780px;width:50px"></div><div class="c ctr" style="left:830px;width:66px">USD</div><div class="c " style="left:896px;width:71px"></div><div class="c ctr" style="left:967px;width:89px">03/06/2011</div><div class="c " style="left:1056px;width:143px"><span style="letter-spacing:0.06px">Example Supplier 174</span></div><div class="c " style="left:1199px;width:48px"></div><div class="c " style="left:1247px;width:42px">Dave</div><div class="c " style="left:1289px;width:104px"><span class="btn b1">Edit</span><span class="btn b2">Delete</span></div></div><div class="row alt" style="top:281px"><div class="c ctr" style="left:0px;width:54px">6822</div><div class="c " style="left:54px;width:29px"><i class="sq" style="left:8px;background:#7a0000"></i></div><div class="c " style="left:83px;width:34px"></div><div class="c " style="left:117px;width:34px"></div><div class="c " style="left:151px;width:192px"><span style="letter-spacing:0.23px">www.example_domain.com</span><svg class="ext" width="12" height="12" viewBox="0 0 12 12"><path d="M1.6 3V10.8H9.8" fill="none" stroke="#aaa" stroke-width="1.5"/><path d="M4.2 8.5L9.6 3" fill="none" stroke="#aaa" stroke-width="1.7" stroke-linecap="round"/><path d="M6.9 1.2H11.8V5.6Z" fill="#aaa"/></svg></div><div class="c ctr" style="left:343px;width:59px">N/A</div><div class="c " style="left:402px;width:98px"><span style="letter-spacing:0">keyword_6822</span></div><div class="c " style="left:500px;width:169px"><span style="letter-spacing:0.33px">www.your_domain.com</span><svg class="ext" width="12" height="12" viewBox="0 0 12 12"><path d="M1.6 3V10.8H9.8" fill="none" stroke="#aaa" stroke-width="1.5"/><path d="M4.2 8.5L9.6 3" fill="none" stroke="#aaa" stroke-width="1.7" stroke-linecap="round"/><path d="M6.9 1.2H11.8V5.6Z" fill="#aaa"/></svg></div><div class="c " style="left:669px;width:111px">/?p=6822</div><div class="c " style="left:780px;width:50px"></div><div class="c ctr" style="left:830px;width:66px">USD</div><div class="c " style="left:896px;width:71px"></div><div class="c ctr" style="left:967px;width:89px">03/06/2011</div><div class="c " style="left:1056px;width:143px"><span style="letter-spacing:0.06px">Example Supplier 174</span></div><div class="c " style="left:1199px;width:48px"></div><div class="c " style="left:1247px;width:42px">Dave</div><div class="c " style="left:1289px;width:104px"><span class="btn b1">Edit</span><span class="btn b2">Delete</span></div></div><div class="row" style="top:308px"><div class="c ctr" style="left:0px;width:54px">6823</div><div class="c " style="left:54px;width:29px"><i class="sq" style="left:8px;background:#7a0000"></i></div><div class="c " style="left:83px;width:34px"></div><div class="c " style="left:117px;width:34px"></div><div class="c " style="left:151px;width:192px"><span style="letter-spacing:0.23px">www.example_domain.com</span><svg class="ext" width="12" height="12" viewBox="0 0 12 12"><path d="M1.6 3V10.8H9.8" fill="none" stroke="#aaa" stroke-width="1.5"/><path d="M4.2 8.5L9.6 3" fill="none" stroke="#aaa" stroke-width="1.7" stroke-linecap="round"/><path d="M6.9 1.2H11.8V5.6Z" fill="#aaa"/></svg></div><div class="c " style="left:343px;width:59px"><span class="pr" ><b style="width:6px"></b></span></div><div class="c " style="left:402px;width:98px"><span style="letter-spacing:0">keyword_6823</span></div><div class="c " style="left:500px;width:169px"><span style="letter-spacing:0.33px">www.your_domain.com</span><svg class="ext" width="12" height="12" viewBox="0 0 12 12"><path d="M1.6 3V10.8H9.8" fill="none" stroke="#aaa" stroke-width="1.5"/><path d="M4.2 8.5L9.6 3" fill="none" stroke="#aaa" stroke-width="1.7" stroke-linecap="round"/><path d="M6.9 1.2H11.8V5.6Z" fill="#aaa"/></svg></div><div class="c " style="left:669px;width:111px">/?p=6823</div><div class="c " style="left:780px;width:50px"></div><div class="c ctr" style="left:830px;width:66px">USD</div><div class="c " style="left:896px;width:71px"></div><div class="c ctr" style="left:967px;width:89px">03/06/2011</div><div class="c " style="left:1056px;width:143px"><span style="letter-spacing:0.06px">Example Supplier 174</span></div><div class="c " style="left:1199px;width:48px"></div><div class="c " style="left:1247px;width:42px">Dave</div><div class="c " style="left:1289px;width:104px"><span class="btn b1">Edit</span><span class="btn b2">Delete</span></div></div><div class="row alt" style="top:335px"><div class="c ctr" style="left:0px;width:54px">6824</div><div class="c " style="left:54px;width:29px"><i class="sq" style="left:8px;background:#6dbb8e"></i></div><div class="c " style="left:83px;width:34px"></div><div class="c " style="left:117px;width:34px"></div><div class="c " style="left:151px;width:192px"><span style="letter-spacing:0.23px">www.example_domain.com</span><svg class="ext" width="12" height="12" viewBox="0 0 12 12"><path d="M1.6 3V10.8H9.8" fill="none" stroke="#aaa" stroke-width="1.5"/><path d="M4.2 8.5L9.6 3" fill="none" stroke="#aaa" stroke-width="1.7" stroke-linecap="round"/><path d="M6.9 1.2H11.8V5.6Z" fill="#aaa"/></svg></div><div class="c " style="left:343px;width:59px"><span class="pr" ><b style="width:6px"></b></span></div><div class="c " style="left:402px;width:98px"><span style="letter-spacing:0">keyword_6824</span></div><div class="c " style="left:500px;width:169px"><span style="letter-spacing:0.33px">www.your_domain.com</span><svg class="ext" width="12" height="12" viewBox="0 0 12 12"><path d="M1.6 3V10.8H9.8" fill="none" stroke="#aaa" stroke-width="1.5"/><path d="M4.2 8.5L9.6 3" fill="none" stroke="#aaa" stroke-width="1.7" stroke-linecap="round"/><path d="M6.9 1.2H11.8V5.6Z" fill="#aaa"/></svg></div><div class="c " style="left:669px;width:111px">/?p=6824</div><div class="c " style="left:780px;width:50px"></div><div class="c ctr" style="left:830px;width:66px">USD</div><div class="c " style="left:896px;width:71px"></div><div class="c ctr" style="left:967px;width:89px">03/06/2011</div><div class="c " style="left:1056px;width:143px"><span style="letter-spacing:0.06px">Example Supplier 74</span></div><div class="c " style="left:1199px;width:48px"></div><div class="c " style="left:1247px;width:42px">Scott</div><div class="c " style="left:1289px;width:104px"><span class="btn b1">Edit</span><span class="btn b2">Delete</span></div></div><div class="row" style="top:362px"><div class="c ctr" style="left:0px;width:54px">6825</div><div class="c " style="left:54px;width:29px"><i class="sq" style="left:8px;background:#dc2638"></i></div><div class="c " style="left:83px;width:34px"></div><div class="c " style="left:117px;width:34px"></div><div class="c " style="left:151px;width:192px"><span style="letter-spacing:0.23px">www.example_domain.com</span><svg class="ext" width="12" height="12" viewBox="0 0 12 12"><path d="M1.6 3V10.8H9.8" fill="none" stroke="#aaa" stroke-width="1.5"/><path d="M4.2 8.5L9.6 3" fill="none" stroke="#aaa" stroke-width="1.7" stroke-linecap="round"/><path d="M6.9 1.2H11.8V5.6Z" fill="#aaa"/></svg></div><div class="c " style="left:343px;width:59px"><span class="pr" ><b style="width:3px"></b></span></div><div class="c " style="left:402px;width:98px"><span style="letter-spacing:0">keyword_6825</span></div><div class="c " style="left:500px;width:169px"><span style="letter-spacing:0.33px">www.your_domain.com</span><svg class="ext" width="12" height="12" viewBox="0 0 12 12"><path d="M1.6 3V10.8H9.8" fill="none" stroke="#aaa" stroke-width="1.5"/><path d="M4.2 8.5L9.6 3" fill="none" stroke="#aaa" stroke-width="1.7" stroke-linecap="round"/><path d="M6.9 1.2H11.8V5.6Z" fill="#aaa"/></svg></div><div class="c " style="left:669px;width:111px">/?p=6825</div><div class="c " style="left:780px;width:50px"></div><div class="c ctr" style="left:830px;width:66px">USD</div><div class="c " style="left:896px;width:71px"></div><div class="c ctr" style="left:967px;width:89px">03/06/2011</div><div class="c " style="left:1056px;width:143px"><span style="letter-spacing:0.06px">Example Supplier 74</span></div><div class="c " style="left:1199px;width:48px"></div><div class="c " style="left:1247px;width:42px">Scott</div><div class="c " style="left:1289px;width:104px"><span class="btn b1">Edit</span><span class="btn b2">Delete</span></div></div><div class="row alt" style="top:389px"><div class="c ctr" style="left:0px;width:54px">6842</div><div class="c " style="left:54px;width:29px"><i class="sq" style="left:8px;background:#7a0000"></i></div><div class="c " style="left:83px;width:34px"></div><div class="c " style="left:117px;width:34px"></div><div class="c " style="left:151px;width:192px"><span style="letter-spacing:0.23px">www.example_domain.com</span><svg class="ext" width="12" height="12" viewBox="0 0 12 12"><path d="M1.6 3V10.8H9.8" fill="none" stroke="#aaa" stroke-width="1.5"/><path d="M4.2 8.5L9.6 3" fill="none" stroke="#aaa" stroke-width="1.7" stroke-linecap="round"/><path d="M6.9 1.2H11.8V5.6Z" fill="#aaa"/></svg></div><div class="c " style="left:343px;width:59px"><span class="pr" ><b style="width:3px"></b></span></div><div class="c " style="left:402px;width:98px"><span style="letter-spacing:0">keyword_6842</span></div><div class="c " style="left:500px;width:169px"><span style="letter-spacing:0.33px">www.your_domain.com</span><svg class="ext" width="12" height="12" viewBox="0 0 12 12"><path d="M1.6 3V10.8H9.8" fill="none" stroke="#aaa" stroke-width="1.5"/><path d="M4.2 8.5L9.6 3" fill="none" stroke="#aaa" stroke-width="1.7" stroke-linecap="round"/><path d="M6.9 1.2H11.8V5.6Z" fill="#aaa"/></svg></div><div class="c " style="left:669px;width:111px">/?p=6842</div><div class="c " style="left:780px;width:50px"></div><div class="c ctr" style="left:830px;width:66px">USD</div><div class="c " style="left:896px;width:71px"></div><div class="c ctr" style="left:967px;width:89px">03/06/2011</div><div class="c " style="left:1056px;width:143px"><span style="letter-spacing:0.06px">Example Supplier 177</span></div><div class="c " style="left:1199px;width:48px"></div><div class="c " style="left:1247px;width:42px">Dave</div><div class="c " style="left:1289px;width:104px"><span class="btn b1">Edit</span><span class="btn b2">Delete</span></div></div><div class="row" style="top:416px"><div class="c ctr" style="left:0px;width:54px">6844</div><div class="c " style="left:54px;width:29px"><i class="sq" style="left:8px;background:#d4601a"></i></div><div class="c " style="left:83px;width:34px"></div><div class="c " style="left:117px;width:34px"></div><div class="c " style="left:151px;width:192px"><span style="letter-spacing:0.23px">www.example_domain.com</span><svg class="ext" width="12" height="12" viewBox="0 0 12 12"><path d="M1.6 3V10.8H9.8" fill="none" stroke="#aaa" stroke-width="1.5"/><path d="M4.2 8.5L9.6 3" fill="none" stroke="#aaa" stroke-width="1.7" stroke-linecap="round"/><path d="M6.9 1.2H11.8V5.6Z" fill="#aaa"/></svg></div><div class="c " style="left:343px;width:59px"><span class="pr" ><b style="width:0px"></b></span></div><div class="c " style="left:402px;width:98px"><span style="letter-spacing:0">keyword_6844</span></div><div class="c " style="left:500px;width:169px"><span style="letter-spacing:0.33px">www.your_domain.com</span><svg class="ext" width="12" height="12" viewBox="0 0 12 12"><path d="M1.6 3V10.8H9.8" fill="none" stroke="#aaa" stroke-width="1.5"/><path d="M4.2 8.5L9.6 3" fill="none" stroke="#aaa" stroke-width="1.7" stroke-linecap="round"/><path d="M6.9 1.2H11.8V5.6Z" fill="#aaa"/></svg></div><div class="c " style="left:669px;width:111px">/?p=6844</div><div class="c " style="left:780px;width:50px"></div><div class="c ctr" style="left:830px;width:66px">USD</div><div class="c " style="left:896px;width:71px"></div><div class="c ctr" style="left:967px;width:89px">03/06/2011</div><div class="c " style="left:1056px;width:143px"><span style="letter-spacing:0.06px">Example Supplier 177</span></div><div class="c " style="left:1199px;width:48px"></div><div class="c " style="left:1247px;width:42px">Dave</div><div class="c " style="left:1289px;width:104px"><span class="btn b1">Edit</span><span class="btn b2">Delete</span></div></div><div class="row alt" style="top:443px"><div class="c ctr" style="left:0px;width:54px">6856</div><div class="c " style="left:54px;width:29px"><i class="sq" style="left:8px;background:#7a0000"></i></div><div class="c " style="left:83px;width:34px"></div><div class="c " style="left:117px;width:34px"></div><div class="c " style="left:151px;width:192px"><span style="letter-spacing:0.23px">www.example_domain.com</span><svg class="ext" width="12" height="12" viewBox="0 0 12 12"><path d="M1.6 3V10.8H9.8" fill="none" stroke="#aaa" stroke-width="1.5"/><path d="M4.2 8.5L9.6 3" fill="none" stroke="#aaa" stroke-width="1.7" stroke-linecap="round"/><path d="M6.9 1.2H11.8V5.6Z" fill="#aaa"/></svg></div><div class="c " style="left:343px;width:59px"><span class="pr" ><b style="width:12px"></b></span></div><div class="c " style="left:402px;width:98px"><span style="letter-spacing:0">keyword_6856</span></div><div class="c " style="left:500px;width:169px"><span style="letter-spacing:0.33px">www.your_domain.com</span><svg class="ext" width="12" height="12" viewBox="0 0 12 12"><path d="M1.6 3V10.8H9.8" fill="none" stroke="#aaa" stroke-width="1.5"/><path d="M4.2 8.5L9.6 3" fill="none" stroke="#aaa" stroke-width="1.7" stroke-linecap="round"/><path d="M6.9 1.2H11.8V5.6Z" fill="#aaa"/></svg></div><div class="c " style="left:669px;width:111px">/?p=6856</div><div class="c " style="left:780px;width:50px"></div><div class="c ctr" style="left:830px;width:66px">USD</div><div class="c " style="left:896px;width:71px"></div><div class="c ctr" style="left:967px;width:89px">03/06/2011</div><div class="c " style="left:1056px;width:143px"><span style="letter-spacing:0.06px">Example Supplier 76</span></div><div class="c " style="left:1199px;width:48px"></div><div class="c " style="left:1247px;width:42px">Scott</div><div class="c " style="left:1289px;width:104px"><span class="btn b1">Edit</span><span class="btn b2">Delete</span></div></div><div class="row" style="top:470px"><div class="c ctr" style="left:0px;width:54px">6865</div><div class="c " style="left:54px;width:29px"><i class="sq" style="left:8px;background:#7a0000"></i></div><div class="c " style="left:83px;width:34px"></div><div class="c " style="left:117px;width:34px"></div><div class="c " style="left:151px;width:192px"><span style="letter-spacing:0.23px">www.example_domain.com</span><svg class="ext" width="12" height="12" viewBox="0 0 12 12"><path d="M1.6 3V10.8H9.8" fill="none" stroke="#aaa" stroke-width="1.5"/><path d="M4.2 8.5L9.6 3" fill="none" stroke="#aaa" stroke-width="1.7" stroke-linecap="round"/><path d="M6.9 1.2H11.8V5.6Z" fill="#aaa"/></svg></div><div class="c " style="left:343px;width:59px"><span class="pr" ><b style="width:9px"></b></span></div><div class="c " style="left:402px;width:98px"><span style="letter-spacing:0">keyword_6865</span></div><div class="c " style="left:500px;width:169px"><span style="letter-spacing:0.33px">www.your_domain.com</span><svg class="ext" width="12" height="12" viewBox="0 0 12 12"><path d="M1.6 3V10.8H9.8" fill="none" stroke="#aaa" stroke-width="1.5"/><path d="M4.2 8.5L9.6 3" fill="none" stroke="#aaa" stroke-width="1.7" stroke-linecap="round"/><path d="M6.9 1.2H11.8V5.6Z" fill="#aaa"/></svg></div><div class="c " style="left:669px;width:111px">/?p=6865</div><div class="c " style="left:780px;width:50px"></div><div class="c ctr" style="left:830px;width:66px">USD</div><div class="c " style="left:896px;width:71px"></div><div class="c ctr" style="left:967px;width:89px">03/06/2011</div><div class="c " style="left:1056px;width:143px"><span style="letter-spacing:0.06px">Example Supplier 179</span></div><div class="c " style="left:1199px;width:48px"></div><div class="c " style="left:1247px;width:42px">Dave</div><div class="c " style="left:1289px;width:104px"><span class="btn b1">Edit</span><span class="btn b2">Delete</span></div></div><div class="row alt" style="top:497px"><div class="c ctr" style="left:0px;width:54px">6874</div><div class="c " style="left:54px;width:29px"><i class="sq" style="left:8px;background:#7a0000"></i></div><div class="c " style="left:83px;width:34px"></div><div class="c " style="left:117px;width:34px"></div><div class="c " style="left:151px;width:192px"><span style="letter-spacing:0.23px">www.example_domain.com</span><svg class="ext" width="12" height="12" viewBox="0 0 12 12"><path d="M1.6 3V10.8H9.8" fill="none" stroke="#aaa" stroke-width="1.5"/><path d="M4.2 8.5L9.6 3" fill="none" stroke="#aaa" stroke-width="1.7" stroke-linecap="round"/><path d="M6.9 1.2H11.8V5.6Z" fill="#aaa"/></svg></div><div class="c " style="left:343px;width:59px"><span class="pr" ><b style="width:6px"></b></span></div><div class="c " style="left:402px;width:98px"><span style="letter-spacing:0">keyword_6874</span></div><div class="c " style="left:500px;width:169px"><span style="letter-spacing:0.33px">www.your_domain.com</span><svg class="ext" width="12" height="12" viewBox="0 0 12 12"><path d="M1.6 3V10.8H9.8" fill="none" stroke="#aaa" stroke-width="1.5"/><path d="M4.2 8.5L9.6 3" fill="none" stroke="#aaa" stroke-width="1.7" stroke-linecap="round"/><path d="M6.9 1.2H11.8V5.6Z" fill="#aaa"/></svg></div><div class="c " style="left:669px;width:111px">/?p=6874</div><div class="c " style="left:780px;width:50px"></div><div class="c ctr" style="left:830px;width:66px">USD</div><div class="c " style="left:896px;width:71px"></div><div class="c ctr" style="left:967px;width:89px">03/06/2011</div><div class="c " style="left:1056px;width:143px"><span style="letter-spacing:0.06px">Example Supplier 68</span></div><div class="c " style="left:1199px;width:48px"></div><div class="c " style="left:1247px;width:42px">Scott</div><div class="c " style="left:1289px;width:104px"><span class="btn b1">Edit</span><span class="btn b2">Delete</span></div></div><div class="row" style="top:524px"><div class="c ctr" style="left:0px;width:54px">6875</div><div class="c " style="left:54px;width:29px"><i class="sq" style="left:8px;background:#7a0000"></i></div><div class="c " style="left:83px;width:34px"></div><div class="c " style="left:117px;width:34px"></div><div class="c " style="left:151px;width:192px"><span style="letter-spacing:0.23px">www.example_domain.com</span><svg class="ext" width="12" height="12" viewBox="0 0 12 12"><path d="M1.6 3V10.8H9.8" fill="none" stroke="#aaa" stroke-width="1.5"/><path d="M4.2 8.5L9.6 3" fill="none" stroke="#aaa" stroke-width="1.7" stroke-linecap="round"/><path d="M6.9 1.2H11.8V5.6Z" fill="#aaa"/></svg></div><div class="c " style="left:343px;width:59px"><span class="pr" ><b style="width:9px"></b></span></div><div class="c " style="left:402px;width:98px"><span style="letter-spacing:0">keyword_6875</span></div><div class="c " style="left:500px;width:169px"><span style="letter-spacing:0.33px">www.your_domain.com</span><svg class="ext" width="12" height="12" viewBox="0 0 12 12"><path d="M1.6 3V10.8H9.8" fill="none" stroke="#aaa" stroke-width="1.5"/><path d="M4.2 8.5L9.6 3" fill="none" stroke="#aaa" stroke-width="1.7" stroke-linecap="round"/><path d="M6.9 1.2H11.8V5.6Z" fill="#aaa"/></svg></div><div class="c " style="left:669px;width:111px">/?p=6875</div><div class="c " style="left:780px;width:50px"></div><div class="c ctr" style="left:830px;width:66px">USD</div><div class="c " style="left:896px;width:71px"></div><div class="c ctr" style="left:967px;width:89px">03/06/2011</div><div class="c " style="left:1056px;width:143px"><span style="letter-spacing:0.06px">Example Supplier 68</span></div><div class="c " style="left:1199px;width:48px"></div><div class="c " style="left:1247px;width:42px">Scott</div><div class="c " style="left:1289px;width:104px"><span class="btn b1">Edit</span><span class="btn b2">Delete</span></div></div><div class="row alt" style="top:551px"><div class="c ctr" style="left:0px;width:54px">6876</div><div class="c " style="left:54px;width:29px"><i class="sq" style="left:8px;background:#7a0000"></i></div><div class="c " style="left:83px;width:34px"></div><div class="c " style="left:117px;width:34px"></div><div class="c " style="left:151px;width:192px"><span style="letter-spacing:0.23px">www.example_domain.com</span><svg class="ext" width="12" height="12" viewBox="0 0 12 12"><path d="M1.6 3V10.8H9.8" fill="none" stroke="#aaa" stroke-width="1.5"/><path d="M4.2 8.5L9.6 3" fill="none" stroke="#aaa" stroke-width="1.7" stroke-linecap="round"/><path d="M6.9 1.2H11.8V5.6Z" fill="#aaa"/></svg></div><div class="c " style="left:343px;width:59px"><i style="position:absolute;left:5px;top:1px;width:1px;height:22px;background:#dfe8f8"></i><span class="pr" style="left:14px"><b style="width:12px"></b></span></div><div class="c " style="left:402px;width:98px"><span style="letter-spacing:0">keyword_6876</span></div><div class="c " style="left:500px;width:169px"><span style="letter-spacing:0.33px">www.your_domain.com</span><svg class="ext" width="12" height="12" viewBox="0 0 12 12"><path d="M1.6 3V10.8H9.8" fill="none" stroke="#aaa" stroke-width="1.5"/><path d="M4.2 8.5L9.6 3" fill="none" stroke="#aaa" stroke-width="1.7" stroke-linecap="round"/><path d="M6.9 1.2H11.8V5.6Z" fill="#aaa"/></svg></div><div class="c " style="left:669px;width:111px">/?p=6876</div><div class="c " style="left:780px;width:50px"></div><div class="c ctr" style="left:830px;width:66px">USD</div><div class="c " style="left:896px;width:71px"></div><div class="c ctr" style="left:967px;width:89px">03/06/2011</div><div class="c " style="left:1056px;width:143px"><span style="letter-spacing:0.06px">Example Supplier 68</span></div><div class="c " style="left:1199px;width:48px"></div><div class="c " style="left:1247px;width:42px">Scott</div><div class="c " style="left:1289px;width:104px"><span class="btn b1">Edit</span><span class="btn b2">Delete</span></div></div><div class="row" style="top:578px"><div class="c ctr" style="left:0px;width:54px">6882</div><div class="c " style="left:54px;width:29px"><i class="sq" style="left:8px;background:#7a0000"></i></div><div class="c " style="left:83px;width:34px"></div><div class="c " style="left:117px;width:34px"></div><div class="c " style="left:151px;width:192px"><span style="letter-spacing:0.23px">www.example_domain.com</span><svg class="ext" width="12" height="12" viewBox="0 0 12 12"><path d="M1.6 3V10.8H9.8" fill="none" stroke="#aaa" stroke-width="1.5"/><path d="M4.2 8.5L9.6 3" fill="none" stroke="#aaa" stroke-width="1.7" stroke-linecap="round"/><path d="M6.9 1.2H11.8V5.6Z" fill="#aaa"/></svg></div><div class="c " style="left:343px;width:59px"><span class="pr" ><b style="width:0px"></b></span></div><div class="c " style="left:402px;width:98px"><span style="letter-spacing:0">keyword_6882</span></div><div class="c " style="left:500px;width:169px"><span style="letter-spacing:0.33px">www.your_domain.com</span><svg class="ext" width="12" height="12" viewBox="0 0 12 12"><path d="M1.6 3V10.8H9.8" fill="none" stroke="#aaa" stroke-width="1.5"/><path d="M4.2 8.5L9.6 3" fill="none" stroke="#aaa" stroke-width="1.7" stroke-linecap="round"/><path d="M6.9 1.2H11.8V5.6Z" fill="#aaa"/></svg></div><div class="c " style="left:669px;width:111px">/?p=6882</div><div class="c " style="left:780px;width:50px"></div><div class="c ctr" style="left:830px;width:66px">USD</div><div class="c " style="left:896px;width:71px"></div><div class="c ctr" style="left:967px;width:89px">03/06/2011</div><div class="c " style="left:1056px;width:143px"><span style="letter-spacing:0.06px">Example Supplier 68</span></div><div class="c " style="left:1199px;width:48px"></div><div class="c " style="left:1247px;width:42px">Scott</div><div class="c " style="left:1289px;width:104px"><span class="btn b1">Edit</span><span class="btn b2">Delete</span></div></div><div class="row alt" style="top:605px"><div class="c ctr" style="left:0px;width:54px">6883</div><div class="c " style="left:54px;width:29px"><i class="sq" style="left:8px;background:#7a0000"></i></div><div class="c " style="left:83px;width:34px"></div><div class="c " style="left:117px;width:34px"></div><div class="c " style="left:151px;width:192px"><span style="letter-spacing:0.23px">www.example_domain.com</span><svg class="ext" width="12" height="12" viewBox="0 0 12 12"><path d="M1.6 3V10.8H9.8" fill="none" stroke="#aaa" stroke-width="1.5"/><path d="M4.2 8.5L9.6 3" fill="none" stroke="#aaa" stroke-width="1.7" stroke-linecap="round"/><path d="M6.9 1.2H11.8V5.6Z" fill="#aaa"/></svg></div><div class="c " style="left:343px;width:59px"><span class="pr" ><b style="width:0px"></b></span></div><div class="c " style="left:402px;width:98px"><span style="letter-spacing:0">keyword_6883</span></div><div class="c " style="left:500px;width:169px"><span style="letter-spacing:0.33px">www.your_domain.com</span><svg class="ext" width="12" height="12" viewBox="0 0 12 12"><path d="M1.6 3V10.8H9.8" fill="none" stroke="#aaa" stroke-width="1.5"/><path d="M4.2 8.5L9.6 3" fill="none" stroke="#aaa" stroke-width="1.7" stroke-linecap="round"/><path d="M6.9 1.2H11.8V5.6Z" fill="#aaa"/></svg></div><div class="c " style="left:669px;width:111px">/?p=6883</div><div class="c " style="left:780px;width:50px"></div><div class="c ctr" style="left:830px;width:66px">USD</div><div class="c " style="left:896px;width:71px"></div><div class="c ctr" style="left:967px;width:89px">03/06/2011</div><div class="c " style="left:1056px;width:143px"><span style="letter-spacing:0.06px">Example Supplier 68</span></div><div class="c " style="left:1199px;width:48px"></div><div class="c " style="left:1247px;width:42px">Scott</div><div class="c " style="left:1289px;width:104px"><span class="btn b1">Edit</span><span class="btn b2">Delete</span></div></div><div class="row" style="top:632px"><div class="c ctr" style="left:0px;width:54px">6884</div><div class="c " style="left:54px;width:29px"><i class="sq" style="left:8px;background:#7a0000"></i></div><div class="c " style="left:83px;width:34px"></div><div class="c " style="left:117px;width:34px"></div><div class="c " style="left:151px;width:192px"><span style="letter-spacing:0.23px">www.example_domain.com</span><svg class="ext" width="12" height="12" viewBox="0 0 12 12"><path d="M1.6 3V10.8H9.8" fill="none" stroke="#aaa" stroke-width="1.5"/><path d="M4.2 8.5L9.6 3" fill="none" stroke="#aaa" stroke-width="1.7" stroke-linecap="round"/><path d="M6.9 1.2H11.8V5.6Z" fill="#aaa"/></svg></div><div class="c " style="left:343px;width:59px"><span class="pr" ><b style="width:0px"></b></span></div><div class="c " style="left:402px;width:98px"><span style="letter-spacing:0">keyword_6884</span></div><div class="c " style="left:500px;width:169px"><span style="letter-spacing:0.33px">www.your_domain.com</span><svg class="ext" width="12" height="12" viewBox="0 0 12 12"><path d="M1.6 3V10.8H9.8" fill="none" stroke="#aaa" stroke-width="1.5"/><path d="M4.2 8.5L9.6 3" fill="none" stroke="#aaa" stroke-width="1.7" stroke-linecap="round"/><path d="M6.9 1.2H11.8V5.6Z" fill="#aaa"/></svg></div><div class="c " style="left:669px;width:111px">/?p=6884</div><div class="c " style="left:780px;width:50px"></div><div class="c ctr" style="left:830px;width:66px">USD</div><div class="c " style="left:896px;width:71px"></div><div class="c ctr" style="left:967px;width:89px">03/06/2011</div><div class="c " style="left:1056px;width:143px"><span style="letter-spacing:0.06px">Example Supplier 68</span></div><div class="c " style="left:1199px;width:48px"></div><div class="c " style="left:1247px;width:42px">Scott</div><div class="c " style="left:1289px;width:104px"><span class="btn b1">Edit</span><span class="btn b2">Delete</span></div></div><div class="row alt" style="top:659px"><div class="c ctr" style="left:0px;width:54px">6885</div><div class="c " style="left:54px;width:29px"><i class="sq" style="left:8px;background:#7a0000"></i></div><div class="c " style="left:83px;width:34px"></div><div class="c " style="left:117px;width:34px"></div><div class="c " style="left:151px;width:192px"><span style="letter-spacing:0.23px">www.example_domain.com</span><svg class="ext" width="12" height="12" viewBox="0 0 12 12"><path d="M1.6 3V10.8H9.8" fill="none" stroke="#aaa" stroke-width="1.5"/><path d="M4.2 8.5L9.6 3" fill="none" stroke="#aaa" stroke-width="1.7" stroke-linecap="round"/><path d="M6.9 1.2H11.8V5.6Z" fill="#aaa"/></svg></div><div class="c " style="left:343px;width:59px"><span class="pr" ><b style="width:0px"></b></span></div><div class="c " style="left:402px;width:98px"><span style="letter-spacing:0">keyword_6885</span></div><div class="c " style="left:500px;width:169px"><span style="letter-spacing:0.33px">www.your_domain.com</span><svg class="ext" width="12" height="12" viewBox="0 0 12 12"><path d="M1.6 3V10.8H9.8" fill="none" stroke="#aaa" stroke-width="1.5"/><path d="M4.2 8.5L9.6 3" fill="none" stroke="#aaa" stroke-width="1.7" stroke-linecap="round"/><path d="M6.9 1.2H11.8V5.6Z" fill="#aaa"/></svg></div><div class="c " style="left:669px;width:111px">/?p=6885</div><div class="c " style="left:780px;width:50px"></div><div class="c ctr" style="left:830px;width:66px">USD</div><div class="c " style="left:896px;width:71px"></div><div class="c ctr" style="left:967px;width:89px">03/06/2011</div><div class="c " style="left:1056px;width:143px"><span style="letter-spacing:0.06px">Example Supplier 68</span></div><div class="c " style="left:1199px;width:48px"></div><div class="c " style="left:1247px;width:42px">Scott</div><div class="c " style="left:1289px;width:104px"><span class="btn b1">Edit</span><span class="btn b2">Delete</span></div></div><div class="row" style="top:686px"><div class="c ctr" style="left:0px;width:54px">6886</div><div class="c " style="left:54px;width:29px"><i class="sq" style="left:8px;background:#7a0000"></i></div><div class="c " style="left:83px;width:34px"></div><div class="c " style="left:117px;width:34px"></div><div class="c " style="left:151px;width:192px"><span style="letter-spacing:0.23px">www.example_domain.com</span><svg class="ext" width="12" height="12" viewBox="0 0 12 12"><path d="M1.6 3V10.8H9.8" fill="none" stroke="#aaa" stroke-width="1.5"/><path d="M4.2 8.5L9.6 3" fill="none" stroke="#aaa" stroke-width="1.7" stroke-linecap="round"/><path d="M6.9 1.2H11.8V5.6Z" fill="#aaa"/></svg></div><div class="c " style="left:343px;width:59px"><span class="pr" ><b style="width:0px"></b></span></div><div class="c " style="left:402px;width:98px"><span style="letter-spacing:0">keyword_6886</span></div><div class="c " style="left:500px;width:169px"><span style="letter-spacing:0.33px">www.your_domain.com</span><svg class="ext" width="12" height="12" viewBox="0 0 12 12"><path d="M1.6 3V10.8H9.8" fill="none" stroke="#aaa" stroke-width="1.5"/><path d="M4.2 8.5L9.6 3" fill="none" stroke="#aaa" stroke-width="1.7" stroke-linecap="round"/><path d="M6.9 1.2H11.8V5.6Z" fill="#aaa"/></svg></div><div class="c " style="left:669px;width:111px">/?p=6886</div><div class="c " style="left:780px;width:50px"></div><div class="c ctr" style="left:830px;width:66px">USD</div><div class="c " style="left:896px;width:71px"></div><div class="c ctr" style="left:967px;width:89px">03/06/2011</div><div class="c " style="left:1056px;width:143px"><span style="letter-spacing:0.06px">Example Supplier 68</span></div><div class="c " style="left:1199px;width:48px"></div><div class="c " style="left:1247px;width:42px">Scott</div><div class="c " style="left:1289px;width:104px"><span class="btn b1">Edit</span><span class="btn b2">Delete</span></div></div>
 </div>
</div>

<div id="sb">
 <svg style="position:absolute;left:6px;top:8px" width="9" height="5" viewBox="0 0 9 5"><path d="M0 5L4.5 0L9 5Z" fill="#333"/></svg>
 <div id="thumb"><svg style="position:absolute;left:4px;top:409px" width="9" height="10" viewBox="0 0 9 10"><path d="M0.5 1H8.5M0.5 5H8.5M0.5 9H8.5" stroke="#555" stroke-width="1"/></svg></div>
 <svg style="position:absolute;left:6px;top:956px" width="9" height="5" viewBox="0 0 9 5"><path d="M0 0L4.5 5L9 0Z" fill="#333"/></svg>
</div>
</body></html>
